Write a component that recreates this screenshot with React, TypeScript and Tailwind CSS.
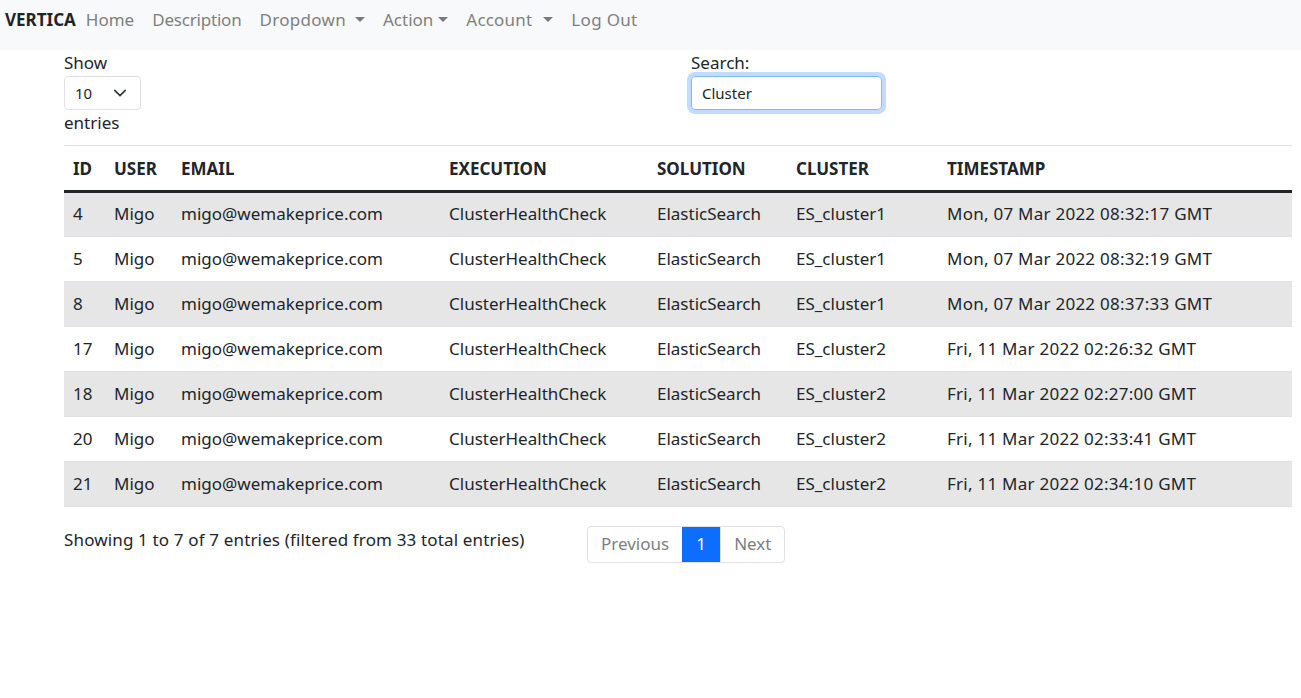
const ROWS = [
  { id: 4, ts: 'Mon, 07 Mar 2022 08:32:17 GMT', cluster: 'ES_cluster1' },
  { id: 5, ts: 'Mon, 07 Mar 2022 08:32:19 GMT', cluster: 'ES_cluster1' },
  { id: 8, ts: 'Mon, 07 Mar 2022 08:37:33 GMT', cluster: 'ES_cluster1' },
  { id: 17, ts: 'Fri, 11 Mar 2022 02:26:32 GMT', cluster: 'ES_cluster2' },
  { id: 18, ts: 'Fri, 11 Mar 2022 02:27:00 GMT', cluster: 'ES_cluster2' },
  { id: 20, ts: 'Fri, 11 Mar 2022 02:33:41 GMT', cluster: 'ES_cluster2' },
  { id: 21, ts: 'Fri, 11 Mar 2022 02:34:10 GMT', cluster: 'ES_cluster2' },
];

const caret = 'inline-block border-x-[5px] border-t-[5px] border-x-transparent border-t-[#7a7a7a] align-middle';

export default function App() {
  return (
    <div className="min-h-[698px] bg-white text-[#212529] text-[17px] [font-family:'Noto_Sans','Noto_Sans_CJK_KR',sans-serif]">
      <nav className="flex h-[50px] items-start bg-[#f8f9fa] pl-[5px] pt-[7px]">
        <span className="mr-[10px] text-[17px] font-bold text-[#212529]">VERTICA</span>
        <div className="flex gap-[18px] text-[#808080]">
          <span>Home</span>
          <span className="tracking-[-0.2px]">Description</span>
          <span className="flex items-center tracking-[0.3px]">Dropdown<span className={`ml-[9px] ${caret}`} /></span>
          <span className="flex items-center">Action<span className={`ml-[5px] ${caret}`} /></span>
          <span className="flex items-center tracking-[0.2px]">Account<span className={`ml-[11px] ${caret}`} /></span>
          <span className="tracking-[0.3px]">Log Out</span>
        </div>
      </nav>

      <main className="pl-[64px] pr-[9px]">
        <div className="flex">
          <div className="w-[627px]">
            <div className="leading-[26px]">Show</div>
            <div className="flex h-[34px] w-[77px] items-center justify-between rounded-[4px] border border-[#dee2e6] pl-[10px] pr-[13px] text-[15px]">
              <span>10</span>
              <svg width="14" height="14" viewBox="0 0 16 16" fill="none" stroke="#343a40" strokeWidth="2" strokeLinecap="round" strokeLinejoin="round">
                <path d="M2 5l6 6 6-6" />
              </svg>
            </div>
            <div className="leading-[26px]">entries</div>
          </div>
          <div>
            <div className="leading-[26px]">Search:</div>
            <div className="flex h-[34px] w-[191px] items-center rounded-[4px] border border-[#86b7fe] pl-[10px] text-[15px] shadow-[0_0_0_4px_rgba(13,110,253,0.25)]">
              Cluster
            </div>
          </div>
        </div>

        <div className="mt-[9px] border-t border-[#dee2e6]" />

        <table className="w-full border-collapse text-left">
          <colgroup>
            <col className="w-[41px]" />
            <col className="w-[67px]" />
            <col className="w-[268px]" />
            <col className="w-[208px]" />
            <col className="w-[139px]" />
            <col className="w-[151px]" />
            <col />
          </colgroup>
          <thead>
            <tr className="border-b-[3px] border-[#212529]">
              {['ID', 'USER', 'EMAIL', 'EXECUTION', 'SOLUTION', 'CLUSTER', 'TIMESTAMP'].map((h) => (
                <th key={h} className="h-[45px] pl-[9px] pt-[1px] font-bold">{h}</th>
              ))}
            </tr>
          </thead>
          <tbody>
            {ROWS.map((r, i) => (
              <tr key={r.id} className={i % 2 === 0 ? 'border-b border-[#dee2e6] bg-[#e6e6e6]' : 'border-b border-[#dee2e6] bg-white'}>
                <td className="h-[45px] pl-[9px]">{r.id}</td>
                <td className="pl-[9px]">Migo</td>
                <td className="pl-[9px]">migo@wemakeprice.com</td>
                <td className="pl-[9px]">ClusterHealthCheck</td>
                <td className="pl-[9px]">ElasticSearch</td>
                <td className="pl-[9px]">{r.cluster}</td>
                <td className="pl-[9px] tracking-[0.25px]">{r.ts}</td>
              </tr>
            ))}
          </tbody>
        </table>

        <div className="mt-[19px] flex items-start">
          <div className="w-[523px] pt-[1px] tracking-[0.15px]">Showing 1 to 7 of 7 entries (filtered from 33 total entries)</div>
          <div className="flex h-[37px] rounded-[4px] border border-[#dee2e6] text-[#7a7f85]">
            <span className="flex items-center px-[13px]">Previous</span>
            <span className="flex w-[38px] items-center justify-center bg-[#0d6efd] text-white">1</span>
            <span className="flex items-center border-l border-[#dee2e6] px-[13px]">Next</span>
          </div>
        </div>
      </main>
    </div>
  );
}
